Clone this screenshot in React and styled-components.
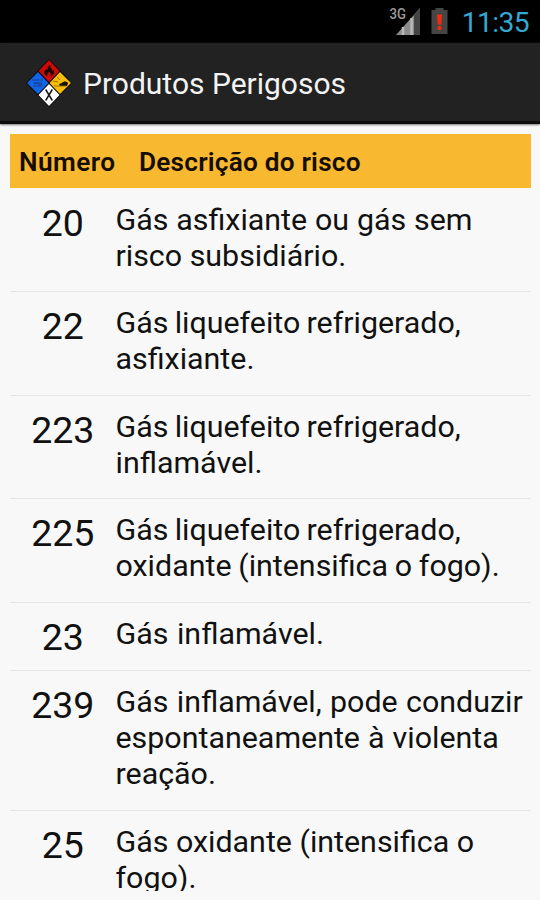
import React from 'react';
import styled, { createGlobalStyle } from 'styled-components';

const GlobalStyle = createGlobalStyle`
  * { box-sizing: border-box; }
  body { margin: 0; background: #f8f8f8; font-family: Roboto, sans-serif; }
`;

const Screen = styled.div`
  width: 540px;
  height: 900px;
  overflow: hidden;
  display: flex;
  flex-direction: column;
  background: #f8f8f8;
  color: #111;
`;

const StatusBar = styled.div`
  height: 43px;
  flex: none;
  display: flex;
  justify-content: flex-end;
  align-items: flex-start;
  background: #000;
`;

const StatusIcons = styled.svg`
  flex: none;
  width: 72px;
  height: 43px;
`;

const Clock = styled.span`
  width: 79px;
  padding-right: 11px;
  text-align: right;
  font-size: 28.2px;
  letter-spacing: -0.6px;
  line-height: 46px;
  color: #35a8d4;
  white-space: nowrap;
`;

const ActionBar = styled.header`
  height: 81px;
  flex: none;
  display: flex;
  align-items: center;
  padding: 0 0 0 26px;
  background: #222;
  border-bottom: 3px solid #0c0c0c;
  box-shadow: 0 1px 2px #777;
`;

const Logo = styled.svg`
  width: 46px;
  height: 48px;
  margin-top: 2px;
`;

const Title = styled.h1`
  margin: 4px 0 0 11px;
  font-size: 30px;
  font-weight: 400;
  line-height: 36px;
  color: #f3f3f3;
  white-space: nowrap;
`;

const Content = styled.main`
  height: 757px;
  margin: 10px 9px 0 10px;
  overflow: hidden;
`;

const TableHeader = styled.div`
  height: 54px;
  margin-bottom: 0.5px;
  display: flex;
  padding-left: 9px;
  background: #f8b830;
  color: #140d00;
  font-size: 26.2px;
  font-weight: 600;
  line-height: 57px;
  white-space: nowrap;
`;

const HeaderCell = styled.span`
  width: ${(p) => p.$width || 'auto'};
  letter-spacing: ${(p) => p.$spacing || 0};
`;

const Row = styled.div`
  display: grid;
  grid-template-columns: 105.5px 1fr;
  height: ${(p) => p.$height}px;
  padding-top: 13px;
  border-bottom: 1.5px solid #e5e5e5;
`;

const Code = styled.span`
  text-align: center;
  font-size: 37.5px;
  line-height: 43px;
`;

const Description = styled.p`
  margin: 0;
  font-size: 30.4px;
  line-height: 36px;
  white-space: nowrap;
`;

const Line = styled.span`
  display: block;
  word-spacing: ${(p) => p.$gap || 0}px;
`;

const rows = [
  ['20', 103.5, [['Gás asfixiante ou gás sem', 0.3], ['risco subsidiário.']]],
  ['22', 103.5, [['Gás liquefeito refrigerado,', -1.3], ['asfixiante.']]],
  ['223', 103.5, [['Gás liquefeito refrigerado,', -1.3], ['inflamável.']]],
  ['225', 103.5, [['Gás liquefeito refrigerado,', -1.3], ['oxidante (intensifica o fogo).', -0.8]]],
  ['23', 68.5, [['Gás inflamável.', 1]]],
  ['239', 139.5, [['Gás inflamável, pode conduzir', 0.8], ['espontaneamente à violenta', 0.5], ['reação.']]],
  ['25', 103.5, [['Gás oxidante (intensifica o'], ['fogo).']]],
];

const NetworkStatus = () => (
  <StatusIcons viewBox="0 0 72 43">
    <path d="M7 35 31 8v27Z" fill="#8c8c8c" />
    <path d="M25 15 31 8v27h-6Z" fill="#444" />
    <path d="M14 27v8M22.5 18v17" stroke="#b8b8b8" strokeWidth="2.5" />
    <text x="0.5" y="19" textLength="16.5" lengthAdjust="spacingAndGlyphs" fontFamily="Roboto, sans-serif" fontSize="14" fontWeight="500" fill="#999" stroke="#000" strokeWidth="1.5" paintOrder="stroke">3G</text>
    <path d="M42.5 10h4V8h8v2h4v24h-16Z" fill="#454545" />
    <path d="M48 14.5h5l-.6 10h-3.8Z" fill="#f02c0c" />
    <circle cx="50.5" cy="28" r="2.2" fill="#f02c0c" />
  </StatusIcons>
);

const HazardLogo = () => (
  <Logo viewBox="0 0 46 48">
    <path d="m23 0 23 24-23 24L0 24Z" fill="#050505" />
    <path d="m23 1 10.5 11L23 23 12.5 12Z" fill="#cf0808" />
    <path d="m12 13 10.5 11L12 35 1 24Z" fill="#1263e5" />
    <path d="m34 13 11 11-11 11-10.5-11Z" fill="#f5bd09" />
    <path d="m23 25 10.5 11L23 47 12.5 36Z" fill="#fff" />
    <path d="M21 17c-4-3-2-5-.4-7l.5 2C23 10 21 8 24 6c-1 3 3 4 2 7l1.3-1.5c1 3 0 4-2.3 5.5 1-3-1-3-2-5-1 2-3 3-2 5Z" fill="#120504" stroke="#120504" strokeWidth=".7" />
    <path d="M6 21h11M8 24h8M7 27h9" stroke="#17458f" strokeWidth="1" />
    <path d="M8 25q2-3 4 0t4 0" stroke="#123b82" strokeWidth="1" fill="none" />
    <path d="m33 25 3-1c1-2 5-2 6 0l-1 3h-7Z" fill="#171300" />
    <path d="m31 18 3 3M27 22l5 1M28 27h12" stroke="#806407" strokeWidth=".8" />
    <path d="m20 31 6 10m0-10-6 10" stroke="#161616" strokeWidth="1.5" />
    <path d="M19 31h2m4 0h2M19 41h2m4 0h2" stroke="#161616" strokeWidth=".8" />
  </Logo>
);

export default function App() {
  return (
    <Screen>
      <GlobalStyle />
      <StatusBar>
        <NetworkStatus />
        <Clock>11:35</Clock>
      </StatusBar>
      <ActionBar>
        <HazardLogo />
        <Title>Produtos Perigosos</Title>
      </ActionBar>
      <Content>
        <TableHeader>
          <HeaderCell $width="120px" $spacing="0.45px">Número</HeaderCell>
          <HeaderCell $spacing="0.22px">Descrição do risco</HeaderCell>
        </TableHeader>
        {rows.map(([code, height, lines]) => (
          <Row key={code} $height={height}>
            <Code>{code}</Code>
            <Description>
              {lines.map(([line, gap]) => <Line key={line} $gap={gap}>{line}</Line>)}
            </Description>
          </Row>
        ))}
      </Content>
    </Screen>
  );
}
